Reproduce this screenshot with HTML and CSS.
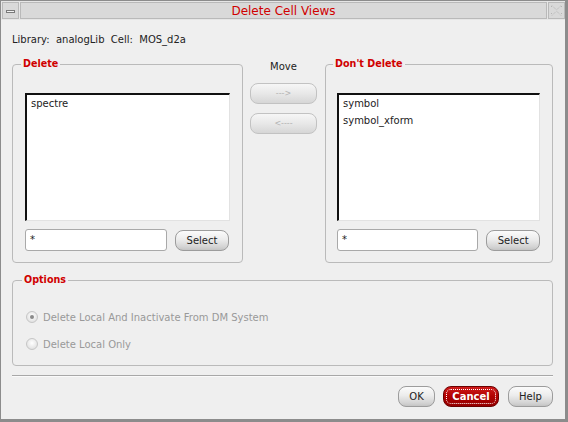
FILE: index.html
```html
<!DOCTYPE html>
<html>
<head>
<meta charset="utf-8">
<link rel="stylesheet" href="styles.css">
</head>
<body>
<div class="window">
  <div class="titlebar">
    <div class="tbtn"><span class="minbar"></span></div>
    <div class="title">Delete Cell Views</div>
    <div class="tbtn">
      <svg class="closeicon" width="15" height="15" viewBox="0 0 15 15">
        <path d="M3 2.5 L7.5 7 L12 2.5 M3 12.5 L7.5 8 L12 12.5 M2.5 3 L2.5 5 M12.5 3 L12.5 5 M2.5 10 L2.5 12 M12.5 10 L12.5 12" fill="none" stroke="#b5b5b5" stroke-width="1" stroke-dasharray="1 1"/>
      </svg>
    </div>
  </div>
  <div class="content">
    <div class="info">Library:&nbsp; analogLib&nbsp; Cell:&nbsp; MOS_d2a</div>
    <div class="lists">
      <fieldset class="group del">
        <legend>Delete</legend>
        <div class="listbox">
          <div class="item">spectre</div>
        </div>
        <div class="filter">
          <div class="input">*</div>
          <button class="btn select">Select</button>
        </div>
      </fieldset>
      <div class="move">
        <div class="movelabel">Move</div>
        <button class="btn disabled">---&gt;</button>
        <button class="btn disabled">&lt;----</button>
      </div>
      <fieldset class="group keep">
        <legend>Don't Delete</legend>
        <div class="listbox">
          <div class="item">symbol</div>
          <div class="item">symbol_xform</div>
        </div>
        <div class="filter">
          <div class="input">*</div>
          <button class="btn select">Select</button>
        </div>
      </fieldset>
    </div>
    <fieldset class="group options">
      <legend>Options</legend>
      <div class="radio first"><span class="dot checked"></span>Delete Local And Inactivate From DM System</div>
      <div class="radio"><span class="dot"></span>Delete Local Only</div>
    </fieldset>
    <div class="sep"></div>
    <div class="actions">
      <button class="btn ok">OK</button>
      <button class="btn cancel">Cancel</button>
      <button class="btn help">Help</button>
    </div>
  </div>
</div>
</body>
</html>
```
FILE: styles.css
```css
html, body {
  margin: 0;
  padding: 0;
}
body {
  font-family: "DejaVu Sans", sans-serif;
  font-size: 10px;
  color: #222;
  background: #efefef;
}
.window {
  width: 568px;
  height: 422px;
  box-sizing: border-box;
  border-top: 1px solid #8c8c8c;
  border-left: 1px solid #8c8c8c;
  border-right: 3px solid #8c8c8c;
  border-bottom: 3px solid #8c8c8c;
  background: #efefef;
  display: flex;
  flex-direction: column;
}
.titlebar {
  display: flex;
  gap: 1px;
  padding: 1px 0 1px 1px;
  background: #e6e6e6;
}
.tbtn, .title {
  height: 17px;
  box-sizing: border-box;
  border: 1px solid #b9b9b9;
  background: #d9d9d9;
}
.tbtn {
  width: 17px;
  display: flex;
  align-items: center;
  justify-content: center;
}
.minbar {
  width: 9px;
  height: 3px;
  box-sizing: border-box;
  border: 1px solid #7a7a7a;
  background: #f2f2f2;
  margin-top: 1px;
}
.title {
  flex: 1;
  text-align: center;
  color: #d00000;
  font-size: 12px;
  line-height: 16px;
}
.content {
  flex: 1;
  padding: 0 12px 0 11px;
  display: flex;
  flex-direction: column;
}
.info {
  margin-top: 14px;
  line-height: 12px;
}
.lists {
  margin-top: 12px;
  display: flex;
}
.group {
  margin: 0;
  padding: 0 12px 11px 12px;
  border: 1px solid #bababa;
  border-radius: 4px;
  min-width: 0;
  box-sizing: border-box;
}
.group legend {
  margin-left: -4px;
  padding: 0 2px;
  font-weight: bold;
  color: #d00000;
  line-height: 12px;
  font-size: 9.6px;
}
.del {
  width: 231px;
}
.keep {
  width: 228px;
  margin-left: 8px;
  padding-left: 11px;
}
.listbox {
  margin-top: 23px;
  height: 128px;
  box-sizing: border-box;
  background: #fff;
  border-top: 2px solid #111;
  border-left: 2px solid #111;
  border-right: 1px solid #e2e2e2;
  border-bottom: 1px solid #e2e2e2;
}
.item {
  line-height: 17px;
  padding: 0 4px;
}
.filter {
  margin-top: 8px;
  display: flex;
  align-items: center;
  gap: 8px;
}
.input {
  width: 142px;
  height: 22px;
  box-sizing: border-box;
  border: 1px solid #a9a9a9;
  border-radius: 3px;
  background: #fff;
  padding: 2px 4px 0;
  line-height: 16px;
}
.btn {
  font-family: inherit;
  font-size: 10px;
  color: #222;
  height: 21px;
  padding: 0;
  box-sizing: border-box;
  border: 1px solid #9c9c9c;
  border-radius: 8px;
  background: linear-gradient(#fbfbfb, #ececec 45%, #d2d2d2 85%, #c4c4c4);
}
.select {
  width: 54px;
}
.move {
  width: 67px;
  margin-left: 7px;
  display: flex;
  flex-direction: column;
  align-items: stretch;
}
.movelabel {
  margin-top: 3px;
  line-height: 12px;
  text-align: center;
}
.btn.disabled {
  margin-top: 10px;
  border-color: #c2c2c2;
  background: linear-gradient(#f6f6f6, #e8e8e8 50%, #d6d6d6);
  color: #b4b4b4;
  font-size: 8px;
}
.btn.disabled + .btn.disabled {
  margin-top: 9px;
}
.options {
  margin-top: 11px;
  padding: 0 12px 11px 13px;
}
.radio {
  display: flex;
  align-items: center;
  height: 20px;
  margin-top: 7px;
  color: #999;
}
.radio.first {
  margin-top: 21px;
}
.dot {
  width: 12px;
  height: 12px;
  box-sizing: border-box;
  border: 1px solid #c6c6c6;
  border-radius: 50%;
  background: radial-gradient(circle at 50% 40%, #ffffff, #e4e4e4 70%, #d2d2d2);
  margin-right: 5px;
  display: flex;
  align-items: center;
  justify-content: center;
}
.dot.checked::after {
  content: "";
  width: 4px;
  height: 4px;
  border-radius: 50%;
  background: #8a8a8a;
}
.sep {
  margin-top: 9px;
  height: 1px;
  background: #a8a8a8;
  border-bottom: 1px solid #fafafa;
}
.actions {
  margin-top: 9px;
  display: flex;
  justify-content: flex-end;
  gap: 8px;
}
.ok {
  width: 37px;
}
.cancel {
  width: 56px;
  margin-right: 1px;
  color: #fff;
  font-weight: bold;
  border-color: #6c0000;
  background: linear-gradient(#cf1a1a, #b00000 50%, #940000);
  outline: 1px dotted #fff;
  outline-offset: -4px;
}
.help {
  width: 45px;
}
```
